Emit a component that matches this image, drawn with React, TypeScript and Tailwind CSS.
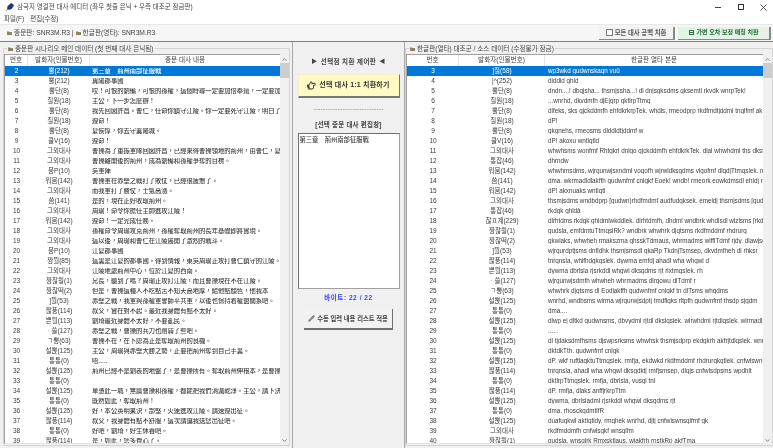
// <== IMPORTS ==>
import { JSX } from "react";
import { ChevronDown, ChevronUp, Feather, Pencil } from "lucide-react";
import { FaRegHandPointRight } from "react-icons/fa";

// <== DATA ==>
const CH_ROWS: [string, string][] = [
  ["뿔(212)", "第三章　荊州南部征服戰"],
  ["뿔(212)", "冀陽郡事國"],
  ["뿔단(8)", "哎！可恨的劉備，可恨的孫權，這個時尋一定要加倍奉還，一定要加倍"],
  ["칠뭔(18)", "主公，下一步怎麼辦！"],
  ["뿔단(8)", "我先回図許昌。曹仁，任命你鎮守江陵。你一定要死守江陵，明白了嗎"],
  ["칠뭔(18)", "遵命！"],
  ["뿔단(8)", "夏侯惇，你去守襄陽城。"],
  ["쿨V(16)", "遵命！"],
  ["그외대사", "曹操為了重振軍隊回図許昌，已經來得曹操領地的荊州，由曹仁，夏侯"],
  ["그외대사", "曹操離開後的荊州，成為劉備和孫權爭奪的目標。"],
  ["뭉P(10)", "吳軍陣"],
  ["뭐뭄(142)", "曹操軍在赤壁之戰打了敗仗，已經很疲憊了。"],
  ["그외대사", "而我軍打了勝仗，士氣高漲。"],
  ["씀(141)", "是的，現在正好收取荊州。"],
  ["그외대사", "周瑜！命令你擔任主帥進攻江陵！"],
  ["뭐뭄(142)", "遵命！一定完成任務。"],
  ["그외대사", "孫權命令周瑜攻克荊州，孫權奪取荊州的長年基礎即將實現。"],
  ["그외대사", "這以後，周瑜和曹仁在江陵展開了激烈的戰斗。"],
  ["뭉P(10)", "江夏郡事國"],
  ["짱뭘(85)", "這裏是江夏的郡事國。得到情報，東吳周瑜正攻打曹仁鎮守的江陵。"],
  ["그외대사", "江陵地處荊州中心，位於江夏的西南。"],
  ["짱찮뭥(1)", "兄長，聽到了嗎？周瑜正攻打江陵，而且曹操現在不在江陵。"],
  ["짱찮떡(2)", "但是，曹操這種人不吃點苦不知天高地厚，給他點顏色，他我本"],
  ["]뭘(53)", "赤壁之戰，我軍與孫權軍會師平共軍，以後也保持着權盟關系吧。"],
  ["짢풍(114)", "叔父，實在對不起。最近我身體有點不太好。"],
  ["쁜뭘(113)", "劉琦最近身體不太好，不要亂民。"],
  ["ㆍ쓸(127)", "赤壁之戰，曹操的兵力也削弱了些吧。"],
  ["ㄱ뽕(63)", "曹操不在，在下認為正是奪取荊州的良機。"],
  ["설뽅(125)", "主公，周瑜與赤壁大勝之勢，正要把荊州奪到自己手裏。"],
  ["통통(0)", "唔....."],
  ["설뽅(125)", "荊州已經不是劉表的地盤了，是曹操所有。奪取荊州伸根本，是曹操所"],
  ["통통(0)", ""],
  ["설뽅(125)", "單憑此一城，無論曹操和孫權，都能把我們消滅乾淨。主公，請下決心"],
  ["통통(0)", "既然如此，奪取荊州！"],
  ["설뽅(125)", "好，本公英明果決，部堅，火速進攻江陵。請速遵出征。"],
  ["짢풍(114)", "叔父，我身體有點不舒服，這次請讓我送您出征吧。"],
  ["통통(0)", "好吧，劉琦，好生休養吧。"],
  ["짢풍(114)", "是，如此，您多費心了。"],
];

const KO_ROWS: [string, string][] = [
  ["]칠(58)", "wp3wkd gudwnskaqn vuü"],
  ["|^(252)", "diddid ghld"],
  ["뿔단(8)", "dndn....! dbqjsha... thsmjssha...! dl dnjsgksdms qksemtl rkvdk wnrpTek!"],
  ["칠뭔(18)", "...wnrhd, dkvdmfh djEjgrp gktlrpTtmq"],
  ["뿔단(8)", "dlfeks, sks gjckddmfh ehfdkrkrpTek. whdls, rmeodprp rkdfmdtjddml tnqlfmf ak"],
  ["칠뭔(18)", "dP!"],
  ["뿔단(8)", "gkgnehs, rmeosms dlddldtjddmf w"],
  ["쿨V(16)", "dP! akoxu wntlqtld"],
  ["그외대사", "whwhsms wonfmf Rhtgkrl dnlgo gjckddmfh ehfdkrkTek. dlal whwhdml ths dksf"],
  ["통잡(46)", "dhrndw"],
  ["뭐뭄(142)", "whwhmsdms, wjrqunwjsxndml voqofh wjrwldksgdms vlgofmf dlqdjTtmqslek. m"],
  ["씀(141)", "dma. wkrmadldlakffh gudwnfmf cnlgkf Eoek! wndb! rmeork eowkdmsdl ehldj rk"],
  ["뭐뭄(142)", "dP! akxnuaks wntlqtl"],
  ["그외대사", "thsmjsdms wndbdprp [gudwn)rhdfmdmf audfudgksek. emeldj thsmjsdms [gudv"],
  ["통잡(46)", "rkdgk ghldå"],
  ["찮ㅍ계(229)", "dlrhtdms rkdgk ghldmlwkddlek. dlrhtdmfh, dhdml wndbrk whdlsdl wlzlsms [rkd"],
  ["짱찮뭥(1)", "gudsla, emfdmtuTtmqslRk? wndbrk whwhrk djqtsms rkdfmddmf rhdrurg"],
  ["짱찮떡(2)", "gkwlaks, whwheh rmakszma ghsskTdmaus, whrmadms wlfflTdmf rjdy. dlawjsg"],
  ["]뭘(53)", "wjrqurdptjsms dnfldhk thsmjsmsdl gkaRp TkdnjTsmsep, dkvdmfheh dl rhksr"],
  ["짢풍(114)", "tnrqnsla, whlfhdgkqslek. dywma emfdj ahadl wha whgwl d"],
  ["쁜뭘(113)", "dywma dbrlsla rjsrkddl whgwl dksgdms rjt rlxtmqslek. rh"],
  ["ㆍ쓸(127)", "wjrqunwjsdmfh whwheh whrmadms dlrgowu dlTdmf r"],
  ["ㄱ뽕(63)", "whwhrk djqtsms dl Eodlakffh gudwnfmf cnlgkf tn dlTsms whgdms"],
  ["설뽅(125)", "wnrhd, wndbsms wlrma wjrqurwjsdptj tmdflgks rltpfh gudwnfmf thsdp sjgdm"],
  ["통통(0)", "dma...."],
  ["설뽅(125)", "dlwp ej dltkd gudwnsms, dbvydml rjtdl dkslqslek. wlrwhdml rjtdlqslek. wlrmadl"],
  ["통통(0)", "......"],
  ["설뽅(125)", "dl tjdaksdmfhsms djswpsrksms whwhsk thsmjsdprp ekdgkrh akfrjtdlqslek. wnrh"],
  ["통통(0)", "dktdkTth. gudwnfmf cnlgk"],
  ["설뽅(125)", "dP. wkf ruftlagktuTtmqslek. rmfja, ekdwkd rkdfmddmf rhdrurgkqtlek. cnfwlswn"],
  ["짢풍(114)", "tnrqnsla, ahadl wha whgwl dksgdktj rmfjsmsep, dlqjs cnfwlsdpsms wpdhlt"],
  ["통통(0)", "dktlrpTtmqslek. rmfja, dbrlsla, vusgl tnl"],
  ["짢풍(114)", "dP. rmfja, dlaks anffjrkrpTtm"],
  ["설뽅(125)", "dywma, dbrlsladml rjsrkddl whgwl dksgdms rjt"],
  ["통통(0)", "dma. rhosckgdmtlfR"],
  ["설뽅(125)", "duafugkwl aktlqtldy. rmqhek wnrhd, djtj cnfwlswnsqlfmf gk"],
  ["그외대사", "rkdfmddmfh cnfwlsgkf wnsqlfm"],
  ["짱찮뭥(1)", "gudsla, wnsqlrk Rmxsktlaus, wjakfrh rnstkRp akfTma"],
];

// <== SMALL FOLDER GLYPH ==>
const TinyFolder = (): JSX.Element => (
  <svg width="5" height="4" viewBox="0 0 5 4" className="shrink-0">
    <path d="M0 .5h2l.5.5H5v3H0z" fill="#8d8468" />
  </svg>
);

// <== WINDOW CONTROLS ==>
const WindowControls = (): JSX.Element => (
  <div className="flex items-center h-full">
    <div className="w-[22px] flex justify-center">
      <div className="w-[6px] h-px bg-[#444]" />
    </div>
    <div className="w-[23px] flex justify-center">
      <div className="w-[6px] h-[6px] border border-[#333]" />
    </div>
    <svg width="7" height="7" viewBox="0 0 7 7" className="mr-[6px] ml-[8px]">
      <path d="M.5.5l6 6M6.5.5l-6 6" stroke="#333" strokeWidth="0.8" />
    </svg>
  </div>
);

// <== SCROLLBAR ==>
const ScrollBar = (): JSX.Element => (
  <div className="w-[9px] shrink-0 bg-[#f0f0f0] flex flex-col items-center text-[#606060]">
    <div className="h-[8px] flex items-center mt-[1px]">
      <ChevronUp size={7} strokeWidth={2.5} />
    </div>
    <div className="w-full h-[15px] bg-[#cdcdcd]" />
    <div className="flex-1" />
    <div className="h-[8px] flex items-center">
      <ChevronDown size={7} strokeWidth={2.5} />
    </div>
  </div>
);

// <== DATA TABLE ==>
type TableProps = {
  title: string;
  start: number;
  numW: string;
  nameW: string;
  textHead: string;
  nameHead: string;
  rows: [string, string][];
  cjk?: boolean;
};

const DataTable = ({ title, start, numW, nameW, textHead, nameHead, rows, cjk }: TableProps): JSX.Element => (
  <div className="relative flex-1 min-w-0 min-h-0 border border-[#d4d4d4] rounded-[1px] mt-[6px] flex pt-[5px] pb-[1px] h-[398px]">
    {/* GROUP LABEL */}
    <div className="absolute -top-[5px] left-[3px] px-[1px] bg-[#f0f0f0] flex items-center gap-[2px] h-[10px] text-[6.6px] text-[#444] whitespace-nowrap">
      <TinyFolder />
      {title}
    </div>
    {/* TABLE */}
    <div className="flex-1 min-w-0 bg-white overflow-hidden border border-[#a0a0a0] border-r-0 border-b-[#e6e6e6]">
      {/* HEADER */}
      <div className="flex h-[11px] text-[6.6px] text-[#444] items-center leading-none">
        <div className={`${numW} shrink-0 h-full flex items-center justify-center border-r border-[#e5e5e5]`}>번호</div>
        <div className={`${nameW} shrink-0 h-full flex items-center justify-center border-r border-[#e5e5e5]`}>{nameHead}</div>
        <div className="flex-1 text-center">{textHead}</div>
      </div>
      {/* ROWS */}
      <div>
        {rows.map(([name, text], i) => (
          <div
            key={start + i}
            className={`flex h-[10px] items-center text-[6.5px] leading-none whitespace-nowrap ${
              i === 0 ? "bg-[#0078d7] text-white" : "text-[#3c3c3c]"
            }`}
          >
            <div className={`${numW} shrink-0 text-center`}>{start + i}</div>
            <div className={`${nameW} shrink-0 text-center`}>{name}</div>
            <div
              className={`flex-1 min-w-0 overflow-hidden ${
                cjk
                  ? "pl-[2px] text-[6.3px] font-medium font-['Noto_Sans_CJK_TC',sans-serif]"
                  : "pl-[3px] text-[6.3px]"
              }`}
            >
              {text}
            </div>
          </div>
        ))}
      </div>
    </div>
    <ScrollBar />
  </div>
);

// <== APP COMPONENT ==>
const App = (): JSX.Element => {
  return (
    <div className="w-[773px] h-[448px] overflow-hidden bg-[#f0f0f0] flex flex-col text-[#333] blur-[0.35px] font-['Liberation_Sans','Noto_Sans_CJK_KR','Noto_Sans_CJK_SC',sans-serif]">
      {/* TITLE BAR */}
      <div className="h-[14px] shrink-0 bg-white flex items-center justify-between">
        <div className="flex items-center gap-[3px] pl-[6px] text-[6.5px] text-[#444]">
          <Feather size={8} className="text-[#1e3a6e]" fill="#1e3a6e" />
          삼국지 영걸전 대사 에디터 (좌우 첫줄 은닉 + 우측 대조군 잠금판)
        </div>
        <WindowControls />
      </div>
      {/* MENU BAR */}
      <div className="h-[10px] shrink-0 bg-white flex items-center gap-[6px] pl-[4px] text-[6.5px] text-[#444]">
        <span>파일(F)</span>
        <span>편집(수정)</span>
      </div>
      {/* TOOLBAR */}
      <div className="h-[18px] shrink-0 bg-[#f6f6f6] border-t border-[#e8e8e8] border-b border-b-[#808080] flex items-center justify-between pl-[7px] pr-[2px]">
        <div className="flex items-center gap-[2px] text-[6.7px] text-[#444]">
          <TinyFolder />
          <span>중문판: SNR3M.R3 | </span>
          <TinyFolder />
          <span>한글판(영타): SNR3M.R3</span>
        </div>
        <div className="flex items-center gap-[3px]">
          <div className="w-[76px] h-[13px] bg-[#f2f2f2] border-r-2 border-b border-[#8a8a8a] flex items-center justify-center gap-[2px] text-[6.3px] font-bold text-[#555] whitespace-nowrap">
            <div className="w-[7px] h-[7px] border border-[#777] bg-white" />
            모든 대사 공백 치환
          </div>
          <div className="w-[93px] h-[13px] bg-[#e3f2e4] border-r-2 border-b border-[#7f8f80] flex items-center justify-center gap-[3px] text-[6px] font-bold text-[#1e6a2e] whitespace-nowrap">
            <div className="w-[5px] h-[5px] border border-[#2e7a3e] flex items-center">
              <div className="w-full h-px bg-[#2e7a3e]" />
            </div>
            가변 오차 보정 매칭 치환
          </div>
        </div>
      </div>
      {/* MAIN */}
      <div className="flex-1 min-h-0 flex">
        {/* LEFT GROUP */}
        <div className="w-[292px] shrink-0 pl-[3px] pr-[2px] flex">
          <DataTable
            title="중문판 시나리오 메인 데이터 (첫 번째 대사 은닉됨)"
            start={2}
            numW="w-[23px]"
            nameW="w-[62px]"
            nameHead="발화자(인물번호)"
            textHead="중문 대사 내용"
            rows={CH_ROWS}
            cjk
          />
        </div>
        {/* CENTER PANEL */}
        <div className="w-[113px] shrink-0 border-x border-[#a8a8a8] flex flex-col items-center bg-[#f0f0f0]">
          <div className="mt-[15px] flex items-center gap-[3px] text-[6.5px] tracking-[0.4px] font-bold text-[#444]">
            <span className="text-[6px]">▶</span>
            선택점 치환 제어판
            <span className="text-[6px]">◀</span>
          </div>
          <div className="mt-[7px] w-[102px] h-[24px] bg-[#fff9c4] border-r border-b-2 border-t border-l border-[#f4f0c8] border-r-[#777] border-b-[#777] flex items-center justify-center gap-[3px] text-[7px] tracking-[0.2px] font-bold text-[#333] whitespace-nowrap">
            <FaRegHandPointRight size={9} className="-rotate-12" />
            선택 대사 1:1 치환하기
          </div>
          <div className="mt-[7px] text-[7px] leading-none text-[#888] tracking-[0.1px]">-----------------------------</div>
          <div className="mt-[8px] text-[6.5px] tracking-[0.2px] leading-[10px] font-bold text-[#444]">[선택 중문 대사 편집창]</div>
          <div className="mt-[3px] w-[102px] h-[156px] shrink-0 bg-white border border-[#707070] border-b-[#a0a0a0] border-r-[#a0a0a0] pl-[1px] pt-[1px] text-[6.3px] leading-[10px] font-medium font-['Noto_Sans_CJK_TC',sans-serif] text-[#444]">
            第三章　荊州南部征服戰
          </div>
          <div className="mt-[4px] text-[6.5px] tracking-[0.55px] leading-[10px] font-bold text-[#3c46ff]">바이트: 22 / 22</div>
          <div className="mt-[6px] w-[89px] h-[21px] bg-[#f2f2f2] border-r border-b-2 border-[#f8f8f8] border-r-[#707070] border-b-[#707070] flex items-center justify-center gap-[2px] text-[6.3px] font-bold text-[#444] whitespace-nowrap">
            <Pencil size={7} fill="#999" className="text-[#666]" />
            수동 입력 내용 리스트 적용
          </div>
        </div>
        {/* RIGHT GROUP */}
        <div className="flex-1 min-w-0 flex">
          <DataTable
            title="한글판(열타) 대조군 / 소스 데이터 (수정불가 잠금)"
            start={3}
            numW="w-[52px]"
            nameW="w-[86px]"
            nameHead="발화자(인물번호)"
            textHead="한글판 열타 본문"
            rows={KO_ROWS}
          />
        </div>
      </div>
    </div>
  );
};

// <== EXPORT APP COMPONENT ==>
export default App;
